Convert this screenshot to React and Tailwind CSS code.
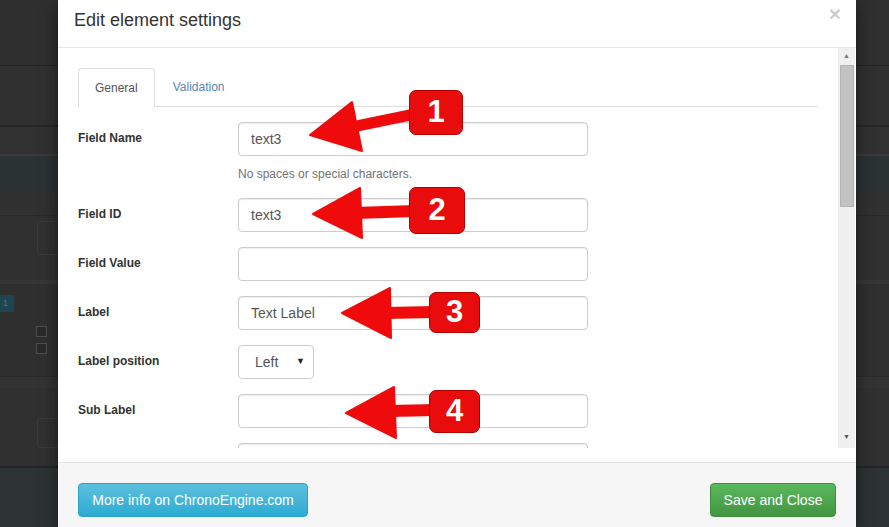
import React from "react";

const font = { fontFamily: '"Liberation Sans", Arial, sans-serif' };

const rows = [
  { label: "Field Name", value: "text3", help: "No spaces or special characters." },
  { label: "Field ID", value: "text3" },
  { label: "Field Value", value: "" },
  { label: "Label", value: "Text Label" },
  { label: "Label position", select: "Left" },
  { label: "Sub Label", value: "" },
  { label: "", value: "" },
];

const badges = [
  { n: "1", cls: "left-[409px] top-[90px] w-[54px] h-[45px]" },
  { n: "2", cls: "left-[409px] top-[187px] w-[56px] h-[47px]" },
  { n: "3", cls: "left-[429px] top-[292px] w-[51px] h-[41px]" },
  { n: "4", cls: "left-[429px] top-[390px] w-[51px] h-[43px]" },
];

function Backdrop() {
  return (
    <div className="flex flex-col w-full h-full">
      <div className="h-[66px] bg-[#2f2f2f] border-b border-[#252525]" />
      <div className="h-[61px] bg-[#303030] border-b-2 border-[#262626]" />
      <div className="h-[29px] bg-[#313131] border-b-2 border-[#3a3a3a]" />
      <div className="h-[34px] bg-[#2a3233]" />
      <div className="h-[26px] bg-[#303030] border-b border-[#292929]" />
      <div className="h-[64px] bg-[#303030] pl-[37px] pt-[5px]">
        <div className="w-[30px] h-[34px] border border-[#3b3b3b] rounded-[3px]" />
      </div>
      <div className="h-[4px] bg-[#363636]" />
      <div className="h-[92px] bg-[#2f2f2f] pt-[11px]">
        <div className="w-[14px] h-[17px] bg-[#1d4650] rounded-r-[2px] text-[9px] text-[#4f7782] leading-[17px] pl-[3px]" style={font}>1</div>
        <div className="pl-[36px] pt-[14px] flex flex-col gap-[6px]">
          <div className="w-[11px] h-[11px] border border-[#4e4e4e] bg-[#2a2a2a]" />
          <div className="w-[11px] h-[11px] border border-[#4e4e4e] bg-[#2a2a2a]" />
        </div>
      </div>
      <div className="h-[12px] bg-[#333] border-t border-[#282828]" />
      <div className="h-[78px] bg-[#303030] pl-[37px] pt-[30px]">
        <div className="w-[30px] h-[30px] border border-[#3b3b3b] rounded-[3px]" />
      </div>
      <div className="h-[2px] bg-[#232323]" />
      <div className="flex-1 bg-[#2d3233]" />
    </div>
  );
}

function Field({ row }) {
  return (
    <div className="flex mb-[15px]">
      <div className="w-[160px] shrink-0 pt-[8px] text-[12px] leading-[17px] font-bold text-[#333]">{row.label}</div>
      <div>
        {row.select ? (
          <div className="w-[76px] h-[34px] border border-[#ccc] rounded-[4px] flex items-center justify-between pl-[16px] pr-[8px] text-[14px] text-[#555]">
            <span>{row.select}</span>
            <span className="text-[9px] text-[#222]">▼</span>
          </div>
        ) : (
          <div className="w-[350px] h-[34px] border border-[#ccc] rounded-[4px] px-3 flex items-center text-[14px] text-[#555] shadow-[inset_0_1px_1px_rgba(0,0,0,0.075)]">
            {row.value}
          </div>
        )}
        {row.help && (
          <div className="mt-[10px] h-[17px] leading-[17px] text-[12px] text-[#737373]">{row.help}</div>
        )}
      </div>
    </div>
  );
}

export default function App() {
  return (
    <div className="relative w-[889px] h-[527px] overflow-hidden bg-[#2f2f2f]" style={font}>
      <Backdrop />

      {/* Modal */}
      <div className="absolute left-[58px] top-0 w-[798px] h-[527px] bg-white flex flex-col shadow-[0_5px_15px_rgba(0,0,0,0.5)]">
        {/* Header */}
        <div className="h-[48px] shrink-0 border-b border-[#e5e5e5] flex justify-between pl-[16px] pr-[15px]">
          <div className="pt-[10px] leading-[20px] text-[18px] text-[#333]">Edit element settings</div>
          <div className="pt-[2px] text-[21px] font-bold leading-[24px] text-black opacity-20">×</div>
        </div>

        {/* Body */}
        <div className="h-[400px] shrink-0 flex overflow-hidden">
          <div className="flex-1 px-[20px] pt-[20px] overflow-hidden">
            <div className="flex border-b border-[#ddd] h-[39px]">
              <div className="h-[39px] px-[16px] border border-[#ddd] border-b-white rounded-t-[4px] bg-white text-[12px] text-[#555] flex items-center">
                General
              </div>
              <div className="ml-[2px] h-[38px] px-[16px] text-[12px] text-[#5786b6] flex items-center">Validation</div>
            </div>
            <div className="pt-[15px]">
              {rows.map((row, i) => (
                <Field key={i} row={row} />
              ))}
            </div>
          </div>
          {/* Scrollbar */}
          <div className="w-[17px] mr-[1px] bg-[#f0f0f0] flex flex-col items-center">
            <div className="h-[17px] flex items-center justify-center text-[7px] text-[#777]">▲</div>
            <div className="w-[14px] h-[142px] bg-[#c2c2c2] border border-[#b4b4b4]" />
            <div className="flex-1" />
            <div className="h-[17px] flex items-center justify-center text-[7px] text-[#555] mb-[2px]">▼</div>
          </div>
        </div>
        <div className="h-[14px] shrink-0" />

        {/* Footer */}
        <div className="flex-1 border-t border-[#e5e5e5] bg-[#f6f6f6] flex justify-between px-[20px] pt-[20px]">
          <button className="h-[34px] w-[230px] rounded-[4px] border border-[#28a4c9] bg-gradient-to-b from-[#5bc0de] to-[#2aabd2] text-white text-[14px]">
            More info on ChronoEngine.com
          </button>
          <button className="h-[34px] w-[126px] rounded-[4px] border border-[#3e8f3e] bg-gradient-to-b from-[#5cb85c] to-[#419641] text-white text-[14px]">
            Save and Close
          </button>
        </div>
      </div>

      {/* Annotation arrows */}
      <svg className="absolute inset-0 pointer-events-none" width="889" height="527" viewBox="0 0 889 527">
        <g fill="#ef0b0b" stroke="#ef0b0b" strokeLinejoin="round">
          <polygon points="310,135 352,102 362,151" strokeWidth="2" />
          <line x1="352" y1="127" x2="415" y2="114" strokeWidth="11" />
          <polygon points="313,214 360,188 362,238" strokeWidth="2" />
          <line x1="355" y1="213" x2="415" y2="211" strokeWidth="12" />
          <polygon points="342,313 390,288 391,338" strokeWidth="2" />
          <line x1="385" y1="313" x2="435" y2="312" strokeWidth="12" />
          <polygon points="346,413 394,387 396,438" strokeWidth="2" />
          <line x1="390" y1="411" x2="435" y2="410" strokeWidth="12" />
        </g>
      </svg>
      {badges.map((b) => (
        <div
          key={b.n}
          className={`absolute ${b.cls} rounded-[7px] bg-[#e80c0c] border border-[#b30000] flex items-center justify-center text-white font-bold text-[31px]`}
        >
          {b.n}
        </div>
      ))}
    </div>
  );
}
